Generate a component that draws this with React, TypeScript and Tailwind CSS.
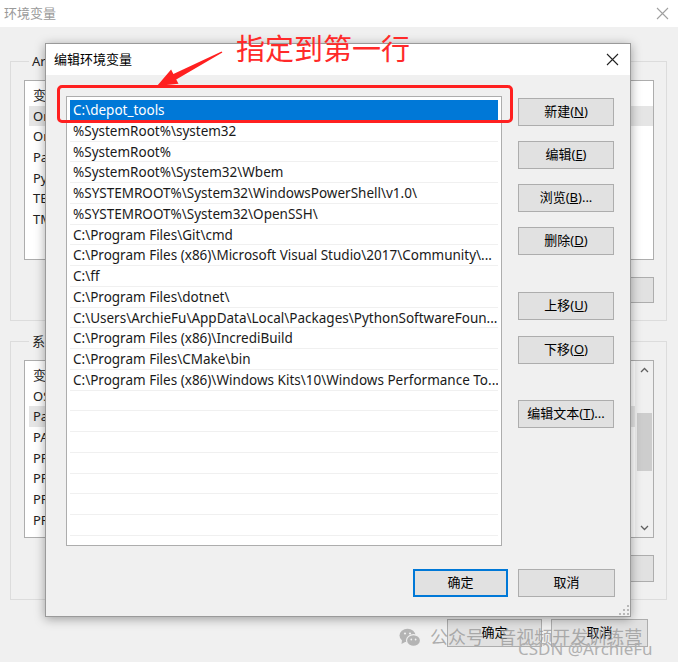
import React from 'react';

const font = "font-['Noto_Sans','Noto_Sans_CJK_SC',sans-serif]";

const paths = [
    String.raw`C:\depot_tools`,
    String.raw`%SystemRoot%\system32`,
    String.raw`%SystemRoot%`,
    String.raw`%SystemRoot%\System32\Wbem`,
    String.raw`%SYSTEMROOT%\System32\WindowsPowerShell\v1.0\\`.slice(0, -1),
    String.raw`%SYSTEMROOT%\System32\OpenSSH\\`.slice(0, -1),
    String.raw`C:\Program Files\Git\cmd`,
    String.raw`C:\Program Files (x86)\Microsoft Visual Studio\2017\Community\...`,
    String.raw`C:\ff`,
    String.raw`C:\Program Files\dotnet\\`.slice(0, -1),
    String.raw`C:\Users\ArchieFu\AppData\Local\Packages\PythonSoftwareFoun...`,
    String.raw`C:\Program Files (x86)\IncrediBuild`,
    String.raw`C:\Program Files\CMake\bin`,
    String.raw`C:\Program Files (x86)\Windows Kits\10\Windows Performance To...`,
];

const userVars = ['变量', 'OneDrive', 'OneDriveConsumer', 'Path', 'PyCharm', 'TEMP', 'TMP'];
const sysVars = ['变量', 'OS', 'Path', 'PATHEXT', 'PROCESSOR_ARCHITECTURE', 'PROCESSOR_IDENTIFIER', 'PROCESSOR_LEVEL', 'PROCESSOR_REVISION', 'PSModulePath'];

const CloseIcon = ({ color }: { color: string }) => (
    <svg width="13" height="13" viewBox="0 0 13 13">
        <path d="M1 1 L12 12 M12 1 L1 12" stroke={color} strokeWidth="1.1" fill="none" />
    </svg>
);

const WinButton = ({ children, className = '' }: { children: React.ReactNode; className?: string }) => (
    <button className={`flex items-center justify-center bg-[#e1e1e1] border border-[#adadad] text-[13px] text-black ${className}`}>
        {children}
    </button>
);

const Grip = () => (
    <svg width="11" height="11" viewBox="0 0 11 11">
        {[[9, 1], [9, 5], [5, 5], [9, 9], [5, 9], [1, 9]].map(([x, y], i) => (
            <rect key={i} x={x} y={y} width="2" height="2" fill="#b8b8b8" />
        ))}
    </svg>
);

const BackList = ({ items, selected, scroll, height }: { items: string[]; selected: number; scroll?: boolean; height: string }) => (
    <div className={`flex bg-white border border-[#adadad] overflow-hidden ${height}`}>
        <div className="flex-1 pt-[4px] pl-[4px]">
            {items.map((v, i) => (
                <div key={i} className={`h-[20.7px] leading-[20.7px] pl-[4px] text-[13px] text-[#222] whitespace-nowrap ${i === selected ? 'bg-[#e5e5e5]' : ''}`}>{v}</div>
            ))}
        </div>
        {scroll && (
            <div className="w-[18px] bg-[#f0f0f0] flex flex-col items-center">
                <div className="h-[18px] flex items-center justify-center">
                    <svg width="9" height="6" viewBox="0 0 9 6"><path d="M1 5 L4.5 1.5 L8 5" stroke="#606060" strokeWidth="1.3" fill="none" /></svg>
                </div>
                <div className="mt-[34px] w-[15px] h-[58px] bg-[#cdcdcd]" />
                <div className="flex-1" />
                <div className="h-[18px] flex items-center justify-center">
                    <svg width="9" height="6" viewBox="0 0 9 6"><path d="M1 1 L4.5 4.5 L8 1" stroke="#606060" strokeWidth="1.3" fill="none" /></svg>
                </div>
            </div>
        )}
    </div>
);

const App = () => {
    return (
        <div className={`relative w-[678px] h-[662px] overflow-hidden bg-[#f0f0f0] ${font}`}>
            {/* background window: 环境变量 */}
            <div className="h-[27px] bg-white flex items-center justify-between pl-[4px] pr-[9px]">
                <span className="text-[13px] text-[#9a9a9a]">环境变量</span>
                <CloseIcon color="#a0a0a0" />
            </div>

            <fieldset className="mt-[26px] ml-[10px] mr-[11px] border border-[#dcdcdc] pl-[13px] pr-[12px] pt-[10px] pb-[17px]">
                <legend className="ml-[5px] px-[3px] text-[13px] leading-[17px] text-[#222]">ArchieFu 的用户变量(U)</legend>
                <BackList items={userVars} selected={1} height="h-[180px]" />
                <div className="mt-[17px] flex justify-end gap-[9px]">
                    <WinButton className="w-[96px] h-[26px]">新建(N)...</WinButton>
                    <WinButton className="w-[96px] h-[26px]">编辑(E)...</WinButton>
                    <WinButton className="w-[96px] h-[26px]">删除(D)</WinButton>
                </div>
            </fieldset>

            <fieldset className="mt-[12px] ml-[10px] mr-[11px] border border-[#dcdcdc] pl-[13px] pr-[12px] pt-[10px] pb-[17px]">
                <legend className="ml-[5px] px-[3px] text-[13px] leading-[17px] text-[#222]">系统变量(S)</legend>
                <BackList items={sysVars} selected={2} scroll height="h-[178px]" />
                <div className="mt-[17px] flex justify-end gap-[9px]">
                    <WinButton className="w-[96px] h-[27px]">新建(W)...</WinButton>
                    <WinButton className="w-[96px] h-[27px]">编辑(I)...</WinButton>
                    <WinButton className="w-[96px] h-[27px]">删除(L)</WinButton>
                </div>
            </fieldset>

            <div className="mt-[19px] flex justify-end gap-[9px] pr-[30px]">
                <WinButton className="w-[95px] h-[28px]">确定</WinButton>
                <WinButton className="w-[97px] h-[28px]">取消</WinButton>
            </div>

            {/* foreground dialog: 编辑环境变量 */}
            <div className="absolute left-[45px] top-[43px] w-[586px] h-[574px] flex flex-col bg-[#f0f0f0] border border-[#9a9a9a] shadow-[0_2px_10px_rgba(0,0,0,0.35)]">
                <div className="h-[31px] bg-white flex items-center justify-between pl-[8px] pr-[11px]">
                    <span className="text-[13px] text-black">编辑环境变量</span>
                    <CloseIcon color="#222" />
                </div>
                <div className="flex pl-[20px] pt-[21px]">
                    <div className="w-[436px] h-[450px] bg-white border border-[#adadad] p-[3px] overflow-hidden">
                        {paths.map((p, i) => (
                            <div
                                key={i}
                                className={`h-[20.75px] leading-[20px] pl-[3px] text-[13.5px] whitespace-nowrap overflow-hidden border-b border-[#f0f0f0] ${i === 0 ? 'bg-[#0078d7] text-white' : 'text-[#1a1a1a]'}`}
                            >
                                {p}
                            </div>
                        ))}
                        {Array.from({ length: 9 }).map((_, i) => (
                            <div key={`e${i}`} className="h-[20.75px] border-b border-[#f0f0f0]" />
                        ))}
                    </div>
                    <div className="ml-[16px] pt-[2px] flex flex-col">
                        <WinButton className="w-[96px] h-[28px]">新建(<u>N</u>)</WinButton>
                        <WinButton className="mt-[15px] w-[96px] h-[28px]">编辑(<u>E</u>)</WinButton>
                        <WinButton className="mt-[15px] w-[96px] h-[28px]">浏览(<u>B</u>)...</WinButton>
                        <WinButton className="mt-[15px] w-[96px] h-[28px]">删除(<u>D</u>)</WinButton>
                        <WinButton className="mt-[37px] w-[96px] h-[28px]">上移(<u>U</u>)</WinButton>
                        <WinButton className="mt-[16px] w-[96px] h-[28px]">下移(<u>O</u>)</WinButton>
                        <WinButton className="mt-[36px] w-[96px] h-[28px]">编辑文本(<u>T</u>)...</WinButton>
                    </div>
                </div>
                <div className="mt-[23px] flex justify-end gap-[10px] pr-[15px]">
                    <WinButton className="w-[95px] h-[28px] !border-2 !border-[#0078d7]">确定</WinButton>
                    <WinButton className="w-[97px] h-[28px]">取消</WinButton>
                </div>
                <div className="flex-1 flex items-end justify-end pr-[1px] pb-[1px]">
                    <Grip />
                </div>
            </div>

            {/* annotation */}
            <div className="absolute left-[57px] top-[85px] w-[456px] h-[38px] border-[3px] border-[#ff2020] rounded-[5px]" />
            <div className="absolute left-[236px] top-[34px] text-[29px] leading-none text-[#ff2a2a]">指定到第一行</div>
            <svg className="absolute left-0 top-0" width="678" height="662" viewBox="0 0 678 662" pointerEvents="none">
                <polygon
                    points="157,86 178.5,83.8 176.2,79.4 222.4,52.6 221.6,51.4 173.4,74 171.1,69.6"
                    fill="#ff2020"
                />
            </svg>

            {/* watermark */}
            <div className="absolute left-[399px] top-[624px] flex items-center gap-[9px] text-[18px] text-[rgba(150,150,150,0.75)]">
                <svg width="22" height="19" viewBox="0 0 22 19">
                    <ellipse cx="8.5" cy="7.5" rx="8" ry="6.8" fill="#b4b4b4" />
                    <path d="M3 12 L2.5 16 L7 13.5 Z" fill="#b4b4b4" />
                    <ellipse cx="14.5" cy="12.5" rx="7" ry="5.8" fill="#b4b4b4" stroke="#f0f0f0" strokeWidth="1.2" />
                    <circle cx="6" cy="5.5" r="1.1" fill="#f0f0f0" />
                    <circle cx="11" cy="5.5" r="1.1" fill="#f0f0f0" />
                    <circle cx="12.3" cy="11.5" r="0.9" fill="#f0f0f0" />
                    <circle cx="16.6" cy="11.5" r="0.9" fill="#f0f0f0" />
                </svg>
                <span>公众号 · 音视频开发训练营</span>
            </div>
            <div className="absolute left-[518px] top-[640px] text-[17px] leading-none text-[#b0b0b0]">CSDN @ArchieFu</div>
        </div>
    );
};

export default App;
